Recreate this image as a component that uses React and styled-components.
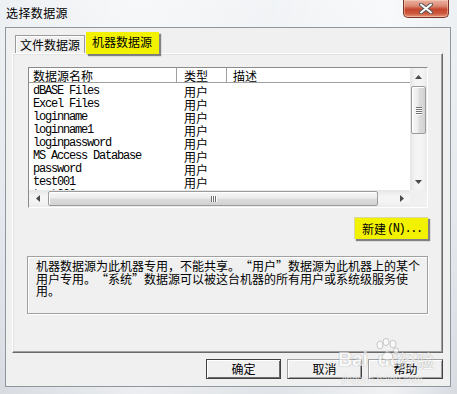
import React from "react";
import styled, { createGlobalStyle } from "styled-components";

const CJK = `"Noto Sans CJK SC", "Liberation Sans", sans-serif`;
const MONO = `"Liberation Mono", "Noto Sans CJK SC", monospace`;

const GlobalStyle = createGlobalStyle`
  html, body { margin: 0; padding: 0; background: #e2e5e9; }
  body { font-family: ${CJK}; }
  * { box-sizing: border-box; }
`;

const Frame = styled.div`
  position: relative;
  width: 457px;
  height: 394px;
  display: flex;
  flex-direction: column;
  padding: 0 6px 7px 5px;
  overflow: hidden;
  background:
    linear-gradient(to right, rgba(255,255,255,0.0), rgba(255,255,255,0.5) 30%, rgba(255,255,255,0.2) 60%, rgba(255,255,255,0.6) 85%, rgba(255,255,255,0)),
    linear-gradient(to bottom, #eef1f4 0%, #e6e9ed 50%, #d8dce1 100%);
`;

const TitleBar = styled.div`
  height: 27px;
  flex: none;
  display: flex;
  align-items: flex-start;
`;

const TitleText = styled.div`
  margin-top: 5px;
  margin-left: 1px;
  font-family: ${CJK};
  font-size: 12px;
  line-height: 16px;
  letter-spacing: 0.4px;
  color: #000;
`;

const CloseButton = styled.div`
  margin-left: auto;
  margin-right: 2px;
  width: 46px;
  height: 18px;
  display: flex;
  align-items: center;
  justify-content: center;
  border: 1px solid #7a3428;
  border-top: none;
  border-radius: 0 0 5px 5px;
  background: linear-gradient(to bottom, #eab3a3 0%, #dc8a73 35%, #c4452d 55%, #cf5a3f 80%, #e59c7e 100%);
  box-shadow: inset 0 0 0 1px rgba(255, 220, 200, 0.45);
`;

const Client = styled.div`
  flex: 1;
  display: flex;
  flex-direction: column;
  background: #f0f0f0;
  border: 1px solid #8f969e;
  padding: 4px 7px 0 6px;
`;

const TabStrip = styled.div`
  height: 21px;
  flex: none;
  display: flex;
  align-items: flex-end;
  padding-left: 3px;
  position: relative;
  z-index: 1;
`;

const Tab = styled.div`
  width: ${(p) => (p.$active ? 73 : 70)}px;
  height: ${(p) => (p.$active ? 22 : 18)}px;
  margin-left: ${(p) => (p.$active ? 1 : 0)}px;
  margin-bottom: ${(p) => (p.$active ? -1 : 0)}px;
  padding-left: ${(p) => (p.$active ? 6 : 4)}px;
  padding-bottom: ${(p) => (p.$active ? 3 : 0)}px;
  display: flex;
  align-items: center;
  font-family: ${CJK};
  font-size: 12px;
  line-height: 16px;
  color: #000;
  border: ${(p) => (p.$active ? "none" : "1px solid #9a9a9a")};
  border-bottom: none;
  background: ${(p) => (p.$active ? "#f2f200" : "#f0f0f0")};
  box-shadow: ${(p) =>
    p.$active ? "2px 2px 1px rgba(40,40,40,0.55)" : "inset 1px 1px 0 #ffffff"};
`;

const Panel = styled.div`
  height: 300px;
  flex: none;
  display: flex;
  flex-direction: column;
  padding: 13px 0 0 15px;
  border: 1px solid;
  border-color: #ffffff #696969 #696969 #ffffff;
  box-shadow: inset -1px -1px 0 #a0a0a0, inset 1px 1px 0 #e3e3e3;
`;

const ListView = styled.div`
  width: 400px;
  height: 141px;
  flex: none;
  display: grid;
  grid-template-columns: 381px 17px;
  grid-template-rows: 122px 17px;
  border: 1px solid;
  border-color: #8a8a8a #ffffff #ffffff #8a8a8a;
  background: #ffffff;
`;

const ListBody = styled.div`
  grid-column: 1;
  grid-row: 1;
  overflow: hidden;
  display: flex;
  flex-direction: column;
`;

const HeaderRow = styled.div`
  height: 15px;
  flex: none;
  display: grid;
  grid-template-columns: 148px 50px 1fr;
  align-items: center;
  border-bottom: 1px solid #a0a0a0;
  background: #ffffff;
`;

const HeaderCell = styled.div`
  height: 14px;
  display: flex;
  align-items: center;
  padding-left: ${(p) => p.$pad}px;
  font-family: ${CJK};
  font-size: 12px;
  color: #000;
  border-right: ${(p) => (p.$last ? "none" : "1px solid #a0a0a0")};
  white-space: nowrap;
`;

const Rows = styled.div`
  padding-top: 2px;
  display: flex;
  flex-direction: column;
`;

const Row = styled.div`
  height: 13px;
  flex: none;
  display: grid;
  grid-template-columns: 148px 50px 1fr;
  align-items: center;
`;

const NameCell = styled.div`
  padding-left: 4px;
  font-family: ${MONO};
  font-size: 12px;
  letter-spacing: -1.2px;
  line-height: 13px;
  color: #000;
  white-space: nowrap;
`;

const TypeCell = styled.div`
  padding-left: 7px;
  font-family: ${CJK};
  font-size: 12px;
  line-height: 13px;
  color: #000;
  white-space: nowrap;
`;

const VScroll = styled.div`
  grid-column: 2;
  grid-row: 1;
  display: flex;
  flex-direction: column;
  background: linear-gradient(to right, #e6e6e6, #f4f4f4 35%, #f4f4f4 70%, #ebebeb);
`;

const HScroll = styled.div`
  grid-column: 1;
  grid-row: 2;
  display: flex;
  background: linear-gradient(to bottom, #e6e6e6, #f4f4f4 35%, #f4f4f4 70%, #ebebeb);
`;

const Corner = styled.div`
  grid-column: 2;
  grid-row: 2;
  background: #f0f0f0;
`;

const ArrowBox = styled.div`
  width: 17px;
  height: 17px;
  flex: none;
  display: flex;
  align-items: center;
  justify-content: center;
`;

const Spacer = styled.div`
  flex: 1;
`;

const VThumb = styled.div`
  margin: 1px 1px 0;
  height: 48px;
  flex: none;
  display: flex;
  flex-direction: column;
  align-items: center;
  justify-content: center;
  gap: 1px;
  border: 1px solid #9b9b9b;
  border-radius: 2px;
  background: linear-gradient(to right, #f7f7f7, #ececec 45%, #dcdcdc 55%, #d2d2d2);
  box-shadow: inset 1px 1px 0 #ffffff;
`;

const HThumb = styled.div`
  margin: 1px 0 1px 2px;
  width: 330px;
  flex: none;
  display: flex;
  align-items: center;
  justify-content: center;
  gap: 1px;
  border: 1px solid #9b9b9b;
  border-radius: 2px;
  background: linear-gradient(to bottom, #f7f7f7, #ececec 45%, #dcdcdc 55%, #d2d2d2);
  box-shadow: inset 1px 1px 0 #ffffff;
`;

const GripH = styled.div`
  width: 6px;
  height: 1px;
  background: #6f6f6f;
  box-shadow: 0 1px 0 #ffffff;
`;

const GripV = styled.div`
  width: 1px;
  height: 6px;
  background: #6f6f6f;
  box-shadow: 1px 0 0 #ffffff;
`;

const NewRow = styled.div`
  width: 400px;
  flex: none;
  margin-top: 9px;
  display: flex;
  justify-content: flex-end;
`;

const NewButton = styled.div`
  width: 74px;
  height: 22px;
  padding-left: 7px;
  display: flex;
  align-items: center;
  background: #f2f200;
  box-shadow: 2px 2px 1px rgba(40, 40, 40, 0.55);
  border-top: 1px solid #d8d8a0;
  border-left: 1px solid #d8d8a0;
  font-family: ${CJK};
  font-size: 12px;
  line-height: 16px;
  color: #000;
  white-space: nowrap;
`;

const Mono = styled.span`
  font-family: ${MONO};
  font-size: 12px;
  letter-spacing: -1.4px;
  margin-left: 1px;
`;

const DescBox = styled.div`
  width: 401px;
  height: 58px;
  flex: none;
  margin-top: 17px;
  margin-left: -1px;
  padding: 3px 0 0 8px;
  border: 1px solid #a0a0a0;
  box-shadow: 1px 1px 0 #ffffff, inset 1px 1px 0 #ffffff;
  font-family: ${CJK};
  font-size: 12px;
  line-height: 12.5px;
  color: #000;
`;

const DescLine = styled.div`
  white-space: nowrap;
`;

const Quote = styled.span`
  display: inline-block;
  width: 12px;
  text-align: ${(p) => (p.$open ? "right" : "left")};
`;

const ButtonRow = styled.div`
  margin-top: 6px;
  flex: none;
  display: flex;
  justify-content: flex-end;
  gap: 6px;
`;

const DlgButton = styled.div`
  width: 75px;
  height: 20px;
  display: flex;
  align-items: center;
  justify-content: center;
  font-family: ${CJK};
  font-size: 12px;
  line-height: 16px;
  color: #000;
  background: #f0f0f0;
  border: 1px solid;
  border-color: ${(p) => (p.$default ? "#404040" : "#a0a0a0 #404040 #404040 #a0a0a0")};
  box-shadow: ${(p) =>
    p.$default
      ? "inset 1px 1px 0 #ffffff, inset -1px -1px 0 #6a6a6a"
      : "inset 1px 1px 0 #ffffff, inset -1px -1px 0 #a0a0a0"};
`;

const Watermark = styled.div`
  position: absolute;
  left: 338px;
  top: 336px;
  width: 100px;
  height: 52px;
  pointer-events: none;
  opacity: 0.6;
`;

const WmBig = styled.div`
  position: absolute;
  left: 0;
  top: 12px;
  font-family: "Liberation Sans", sans-serif;
  font-weight: bold;
  font-size: 20px;
  color: #ffffff;
  text-shadow: 0 0 1px #8a8a8a, 0 0 1px #8a8a8a;
  letter-spacing: -0.5px;
  white-space: pre;
`;

const WmCn = styled.div`
  position: absolute;
  left: 60px;
  top: 11px;
  font-family: ${CJK};
  font-size: 18px;
  color: #ffffff;
  text-shadow: 0 0 1px #8a8a8a, 0 0 1px #8a8a8a;
  white-space: nowrap;
`;

const WmSmall = styled.div`
  position: absolute;
  left: 4px;
  top: 38px;
  font-family: "Liberation Sans", sans-serif;
  font-size: 10px;
  color: #ffffff;
  text-shadow: 0 0 1px #9a9a9a;
  white-space: nowrap;
`;

const WmPaw = styled.svg`
  position: absolute;
  left: 36px;
  top: 2px;
`;

const Arrow = ({ dir }) => {
  const pts = {
    up: "0,4 3.5,0 7,4",
    down: "0,0 7,0 3.5,4",
    left: "4,0 4,7 0,3.5",
    right: "0,0 4,3.5 0,7",
  }[dir];
  const vertical = dir === "up" || dir === "down";
  return (
    <svg width={vertical ? 7 : 4} height={vertical ? 4 : 7} viewBox={vertical ? "0 0 7 4" : "0 0 4 7"}>
      <polygon points={pts} fill="#4a4a4a" />
    </svg>
  );
};

const rows = [
  "dBASE Files",
  "Excel Files",
  "loginname",
  "loginname1",
  "loginpassword",
  "MS Access Database",
  "password",
  "test001",
  "test002",
];

export default function App() {
  return (
    <>
      <GlobalStyle />
      <Frame>
        <TitleBar>
          <TitleText>选择数据源</TitleText>
          <CloseButton>
            <svg width="14" height="11" viewBox="0 0 14 11">
              <path
                d="M2 1.5 L12 9.5 M12 1.5 L2 9.5"
                stroke="#5a5a5a"
                strokeWidth="4"
                strokeLinecap="round"
              />
              <path
                d="M2 1.5 L12 9.5 M12 1.5 L2 9.5"
                stroke="#ffffff"
                strokeWidth="2"
                strokeLinecap="round"
              />
            </svg>
          </CloseButton>
        </TitleBar>
        <Client>
          <TabStrip>
            <Tab>文件数据源</Tab>
            <Tab $active>机器数据源</Tab>
          </TabStrip>
          <Panel>
            <ListView>
              <ListBody>
                <HeaderRow>
                  <HeaderCell $pad={4}>数据源名称</HeaderCell>
                  <HeaderCell $pad={7}>类型</HeaderCell>
                  <HeaderCell $pad={6} $last>描述</HeaderCell>
                </HeaderRow>
                <Rows>
                  {rows.map((name) => (
                    <Row key={name}>
                      <NameCell>{name}</NameCell>
                      <TypeCell>用户</TypeCell>
                      <div />
                    </Row>
                  ))}
                </Rows>
              </ListBody>
              <VScroll>
                <ArrowBox>
                  <Arrow dir="up" />
                </ArrowBox>
                <VThumb>
                  <GripH />
                  <GripH />
                  <GripH />
                  <GripH />
                </VThumb>
                <Spacer />
                <ArrowBox>
                  <Arrow dir="down" />
                </ArrowBox>
              </VScroll>
              <HScroll>
                <ArrowBox>
                  <Arrow dir="left" />
                </ArrowBox>
                <HThumb>
                  <GripV />
                  <GripV />
                  <GripV />
                </HThumb>
                <Spacer />
                <ArrowBox>
                  <Arrow dir="right" />
                </ArrowBox>
              </HScroll>
              <Corner />
            </ListView>
            <NewRow>
              <NewButton>
                新建<Mono>(N)...</Mono>
              </NewButton>
            </NewRow>
            <DescBox>
              <DescLine>
                机器数据源为此机器专用，不能共享。<Quote $open>“</Quote>用户<Quote>”</Quote>数据源为此机器上的某个
              </DescLine>
              <DescLine>
                用户专用。<Quote $open>“</Quote>系统<Quote>”</Quote>数据源可以被这台机器的所有用户或系统级服务使
              </DescLine>
              <DescLine>用。</DescLine>
            </DescBox>
          </Panel>
          <ButtonRow>
            <DlgButton $default>确定</DlgButton>
            <DlgButton>取消</DlgButton>
            <DlgButton>帮助</DlgButton>
          </ButtonRow>
        </Client>
        <Watermark>
          <WmBig>{"Bai  du"}</WmBig>
          <WmPaw width="26" height="24" viewBox="0 0 26 24">
            <g fill="#ffffff" stroke="#9a9a9a" strokeWidth="0.8">
              <ellipse cx="6" cy="7" rx="3" ry="4" />
              <ellipse cx="12" cy="4" rx="3" ry="3.6" />
              <ellipse cx="19" cy="6" rx="3" ry="3.8" />
              <ellipse cx="22" cy="13" rx="2.6" ry="3.2" />
              <path d="M8 20 C8 13, 18 12, 19 19 C19 23, 9 23, 8 20 Z" />
            </g>
          </WmPaw>
          <WmCn>经验</WmCn>
          <WmSmall>jingyan.baidu.com</WmSmall>
        </Watermark>
      </Frame>
    </>
  );
}
